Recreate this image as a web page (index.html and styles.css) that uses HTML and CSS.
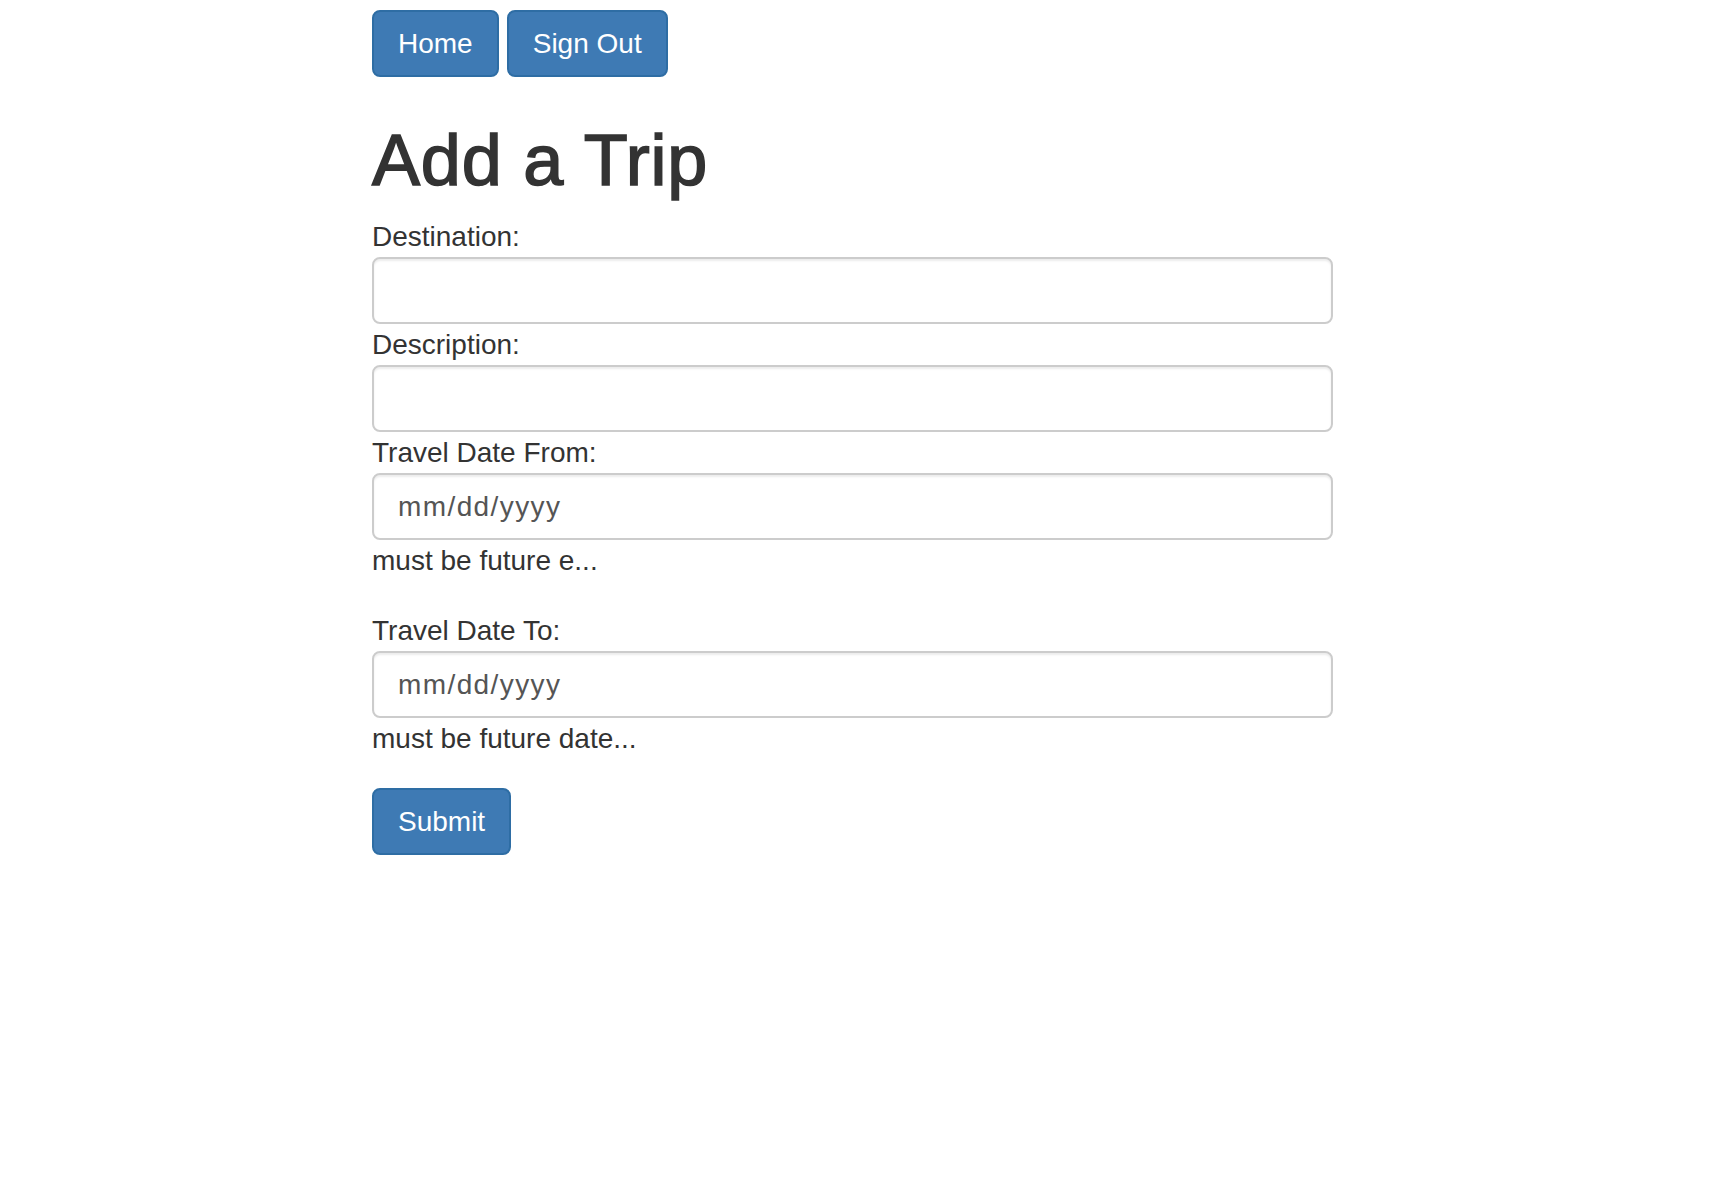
FILE: index.html
```html
<!DOCTYPE html>
<html lang="en">
<head>
<meta charset="utf-8">
<title>Add a Trip</title>
<link rel="stylesheet" href="styles.css">
</head>
<body>
<div class="page">
  <nav class="nav">
    <button class="btn" type="button">Home</button>
    <button class="btn" type="button">Sign Out</button>
  </nav>
  <h1 class="title">Add a Trip</h1>
  <form class="form">
    <label class="label" for="dest">Destination:</label>
    <input class="field" id="dest" type="text">
    <label class="label" for="desc">Description:</label>
    <input class="field" id="desc" type="text">
    <label class="label" for="from">Travel Date From:</label>
    <input class="field" id="from" type="text" placeholder="mm/dd/yyyy">
    <div class="help">must be future e...</div>
    <label class="label" for="to">Travel Date To:</label>
    <input class="field" id="to" type="text" placeholder="mm/dd/yyyy">
    <div class="help">must be future date...</div>
    <button class="btn" type="submit">Submit</button>
  </form>
</div>
</body>
</html>
```
FILE: styles.css
```css
html, body {
  margin: 0;
  padding: 0;
  background: #fff;
}
body {
  font-family: "Liberation Sans", Arial, sans-serif;
  color: #333;
}
.page {
  margin-left: 372px;
  width: 961px;
}
.nav {
  display: flex;
  gap: 8px;
  padding-top: 10px;
}
.btn {
  font-family: "Liberation Sans", Arial, sans-serif;
  font-size: 28px;
  line-height: 39px;
  padding: 12px 24px;
  border: 2px solid #2e6da4;
  border-radius: 8px;
  background: #3e7ab4;
  color: #fff;
  cursor: pointer;
  display: inline-block;
}
.title {
  margin: 44px 0 16px;
  font-size: 72px;
  line-height: 79px;
  font-weight: 400;
  letter-spacing: 0.8px;
  color: #333;
  -webkit-text-stroke: 1.6px #333;
}
.form {
  display: block;
}
.label {
  display: block;
  font-size: 28px;
  line-height: 40px;
  padding-top: 1px;
}
.field {
  display: block;
  box-sizing: border-box;
  width: 100%;
  height: 67px;
  margin: 0;
  padding: 0 24px;
  border: 2px solid #ccc;
  border-radius: 8px;
  box-shadow: inset 0 2px 2px rgba(0, 0, 0, 0.075);
  font-family: "Liberation Sans", Arial, sans-serif;
  font-size: 28px;
  letter-spacing: 1.4px;
  color: #555;
  background: #fff;
  outline: none;
}
.field::placeholder {
  color: #555;
  opacity: 1;
}
.help {
  font-size: 28px;
  line-height: 40px;
  margin: 1px 0 29px;
}
```
